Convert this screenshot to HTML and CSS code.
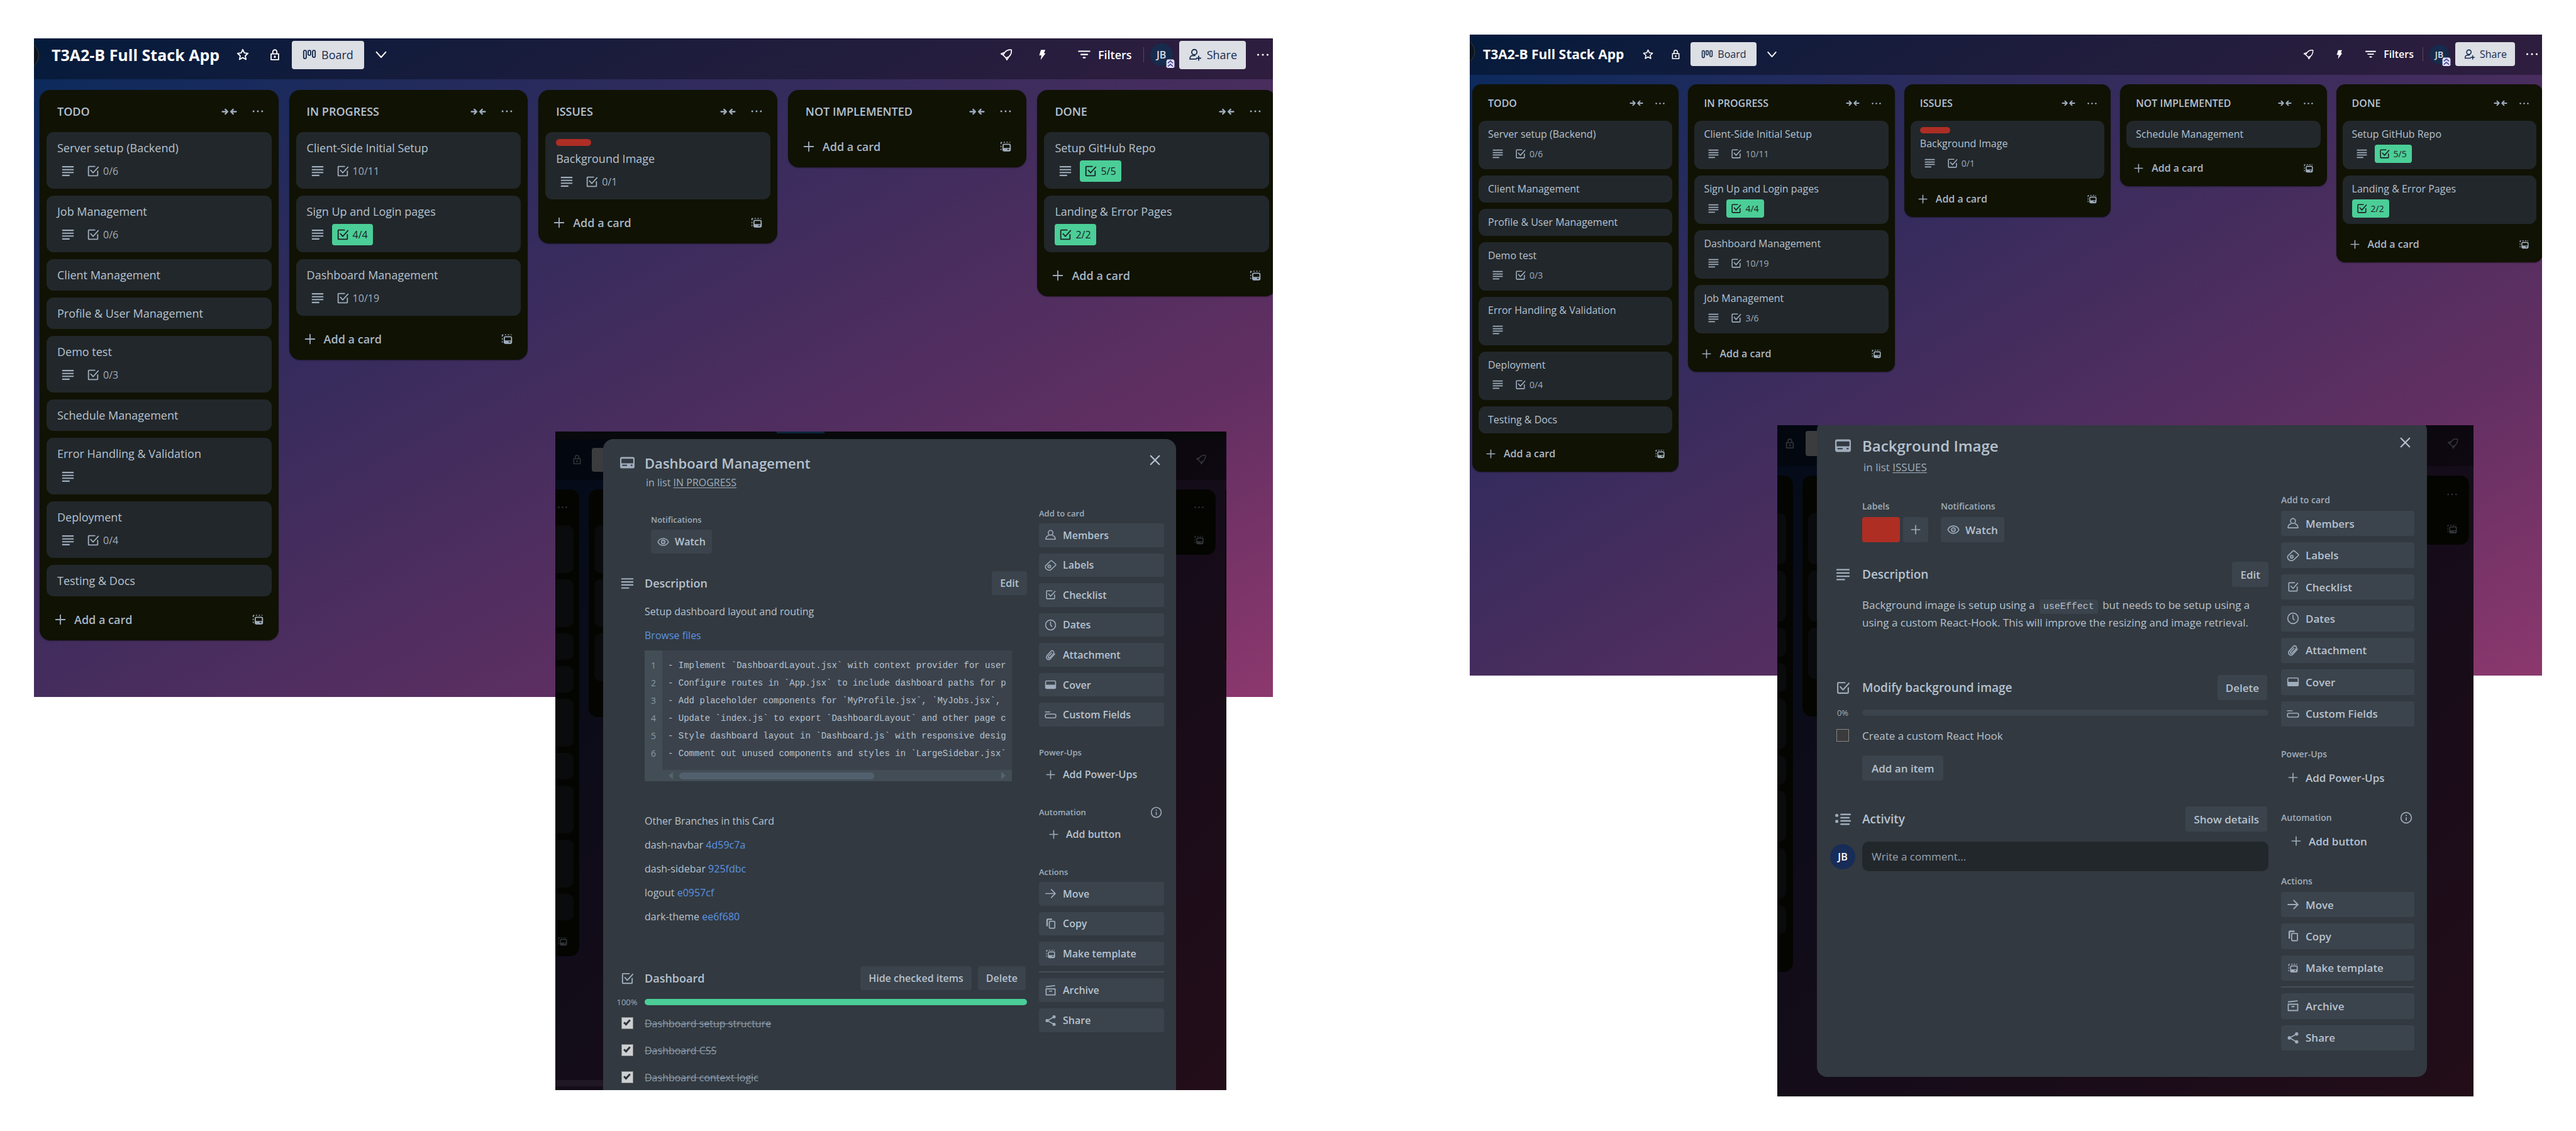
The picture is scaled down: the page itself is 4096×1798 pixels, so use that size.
FILE: index.html
```html
<!DOCTYPE html>
<html lang="en">
<head>
<meta charset="utf-8">
<title>T3A2-B Full Stack App</title>
<link rel="stylesheet" href="styles.css">
</head>
<body>
<svg class="sprite" aria-hidden="true">
  <symbol id="star" viewBox="0 0 24 24"><path d="M12 3l2.700 5.800 6.300.8-4.700 4.300 1.300 6.300L12 17l-5.600 3.200 1.300-6.300L3 9.600l6.300-.8z" fill="none" stroke="currentColor" stroke-width="2" stroke-linejoin="round"/></symbol>
  <symbol id="lock" viewBox="0 0 24 24"><path d="M5.500 10.500h13v10h-13zM8.500 10V7a3.500 3.500 0 0 1 7 0v3" fill="none" stroke="currentColor" stroke-width="2" stroke-linejoin="round"/><rect x="10.500" y="13.500" width="3" height="4" rx="1" fill="currentColor"/></symbol>
  <symbol id="boards" viewBox="0 0 24 24"><g fill="none" stroke="currentColor" stroke-width="2"><rect x="2" y="4.500" width="4.500" height="14" rx="2"/><rect x="9.750" y="4.500" width="4.500" height="8.500" rx="2"/><rect x="17.500" y="4.500" width="4.500" height="12" rx="2"/></g></symbol>
  <symbol id="chevron" viewBox="0 0 24 24"><path d="M4 7.500l8 9 8-9" fill="none" stroke="currentColor" stroke-width="2.400" stroke-linecap="round" stroke-linejoin="round"/></symbol>
  <symbol id="rocket" viewBox="0 0 24 24"><path d="M21 3.500c-5-.5-9 1-11.500 4.500L3 10.500l3.500 2 5 5L13 21l3.500-5.500C20 12.500 21.500 8.500 21 3.500zM6.500 12.500l3-4.500M11.500 17.500l5-2" fill="none" stroke="currentColor" stroke-width="1.800" stroke-linejoin="round"/></symbol>
  <symbol id="bolt" viewBox="0 0 24 24"><path d="M10 3.500h7.500l-2.300 6h2.800L9.500 21l1.300-8H7z" fill="currentColor"/></symbol>
  <symbol id="filter" viewBox="0 0 24 24"><path d="M2.500 6h19M6.500 11.500h11M10.500 17h3" fill="none" stroke="currentColor" stroke-width="2.400" stroke-linecap="round"/></symbol>
  <symbol id="invite" viewBox="0 0 24 24"><path d="M14 19.500H3.500v-1.500c0-2.500 2-4.500 4.500-4.500h4M18.500 14.500v7M15 18h7" fill="none" stroke="currentColor" stroke-width="2" stroke-linecap="round"/><circle cx="11" cy="7.500" r="4.500" fill="none" stroke="currentColor" stroke-width="2"/></symbol>
  <symbol id="dots" viewBox="0 0 24 24"><g fill="currentColor"><circle cx="4.500" cy="12" r="1.600"/><circle cx="12" cy="12" r="1.600"/><circle cx="19.500" cy="12" r="1.600"/></g></symbol>
  <symbol id="collapse" viewBox="0 0 24 24"><path d="M1.500 12H9M6 8.500L9.500 12 6 15.500M22.500 12H15M18 8.500L14.500 12l3.500 3.500" fill="none" stroke="currentColor" stroke-width="2.200" stroke-linecap="round" stroke-linejoin="round"/></symbol>
  <symbol id="desc" viewBox="0 0 24 24"><path d="M2 4.500h20M2 9.500h20M2 14.500h20M2 19.500h13" fill="none" stroke="currentColor" stroke-width="2.200"/></symbol>
  <symbol id="check" viewBox="0 0 24 24"><path d="M15 4H5a1 1 0 0 0-1 1v14a1 1 0 0 0 1 1h14a1 1 0 0 0 1-1v-7M8 10.500l4 4.500 9-10" fill="none" stroke="currentColor" stroke-width="2" stroke-linecap="round" stroke-linejoin="round"/></symbol>
  <symbol id="plus" viewBox="0 0 24 24"><path d="M12 4v16M4 12h16" fill="none" stroke="currentColor" stroke-width="2" stroke-linecap="round"/></symbol>
  <symbol id="template" viewBox="0 0 24 24"><path d="M4 18v-2.500M4 13v-2.500M4 8V5h2M8.500 4.500H11M13.500 4.500H16M18.500 4.500H20" fill="none" stroke="currentColor" stroke-width="1.600"/><rect x="7.500" y="8" width="12.500" height="11.500" rx="2" fill="none" stroke="currentColor" stroke-width="2"/><path fill-rule="evenodd" d="M7.500 14.500H20v4a1.500 1.500 0 0 1-1.500 1.500H9a1.500 1.500 0 0 1-1.500-1.500zM15 16v1.800h3V16z" fill="currentColor"/></symbol>
  <symbol id="card" viewBox="0 0 24 24"><path fill-rule="evenodd" fill="currentColor" d="M3 2.500h18a3 3 0 0 1 3 3v13a3 3 0 0 1-3 3H3a3 3 0 0 1-3-3v-13a3 3 0 0 1 3-3zM3 5.500a.8.8 0 0 0-.8.8v6.700h19.600V6.300a.8.8 0 0 0-.8-.8zM3.500 15.500v2h8v-2zM17.500 15.500v2h3v-2z"/></symbol>
  <symbol id="close" viewBox="0 0 24 24"><path d="M3.500 3.500l17 17M20.500 3.500l-17 17" fill="none" stroke="currentColor" stroke-width="2.800" stroke-linecap="round"/></symbol>
  <symbol id="eye" viewBox="0 0 24 24"><path d="M1.500 12C3.500 7.500 7.500 5 12 5s8.500 2.500 10.500 7c-2 4.500-6 7-10.500 7S3.500 16.500 1.500 12z" fill="none" stroke="currentColor" stroke-width="2"/><circle cx="12" cy="12" r="3.600" fill="none" stroke="currentColor" stroke-width="2"/><circle cx="12" cy="12" r="1" fill="currentColor"/></symbol>
  <symbol id="person" viewBox="0 0 24 24"><circle cx="12" cy="7.500" r="4.700" fill="none" stroke="currentColor" stroke-width="2"/><path d="M8.800 12.500C5 13.500 2.500 16 2.500 20.500h19c0-4.500-2.500-7-6.300-8" fill="none" stroke="currentColor" stroke-width="2" stroke-linejoin="round"/></symbol>
  <symbol id="label" viewBox="0 0 24 24"><path d="M2.500 12.500L12 3.500c.8-.8 2-.8 2.800 0l7 6c1 .8 1 2 .2 2.800l-8.500 8c-3 2.700-7.500 2.200-10-.6-2-2.300-2.500-4.700-1-7.200z" fill="none" stroke="currentColor" stroke-width="2" stroke-linejoin="round"/><circle cx="9.500" cy="14.500" r="2.800" fill="none" stroke="currentColor" stroke-width="1.800"/><circle cx="9.500" cy="14.500" r="1" fill="currentColor"/></symbol>
  <symbol id="clock" viewBox="0 0 24 24"><circle cx="12" cy="12" r="10" fill="none" stroke="currentColor" stroke-width="2"/><path d="M12 6v6l2.500 3" fill="none" stroke="currentColor" stroke-width="2" stroke-linecap="round"/></symbol>
  <symbol id="clip" viewBox="0 0 24 24"><path d="M20.500 9.500l-8.500 9.500c-2 2.200-5 2.500-7 .8s-2-4.800 0-7l7.500-8.300c1.400-1.500 3.500-1.700 5-.4s1.500 3.500.1 5L10.500 17c-.8.900-2 1-2.800.3s-.8-1.900 0-2.800l6-6.700" fill="none" stroke="currentColor" stroke-width="2" stroke-linecap="round"/></symbol>
  <symbol id="cover" viewBox="0 0 24 24"><rect x="2" y="4.500" width="20" height="15" rx="2" fill="none" stroke="currentColor" stroke-width="2"/><path d="M2 12h20v6.500a1.500 1.500 0 0 1-1.500 1.500h-17A1.500 1.500 0 0 1 2 18.500z" fill="currentColor"/></symbol>
  <symbol id="fields" viewBox="0 0 24 24"><path d="M1.500 6h9" fill="none" stroke="currentColor" stroke-width="2" stroke-linecap="round"/><rect x="1.500" y="10.500" width="21" height="7.500" rx="2.500" fill="none" stroke="currentColor" stroke-width="2"/></symbol>
  <symbol id="info" viewBox="0 0 24 24"><circle cx="12" cy="12" r="10" fill="none" stroke="currentColor" stroke-width="2"/><circle cx="12" cy="7.600" r="1.300" fill="currentColor"/><path d="M12 11v6.500" stroke="currentColor" stroke-width="2"/></symbol>
  <symbol id="arrow" viewBox="0 0 24 24"><path d="M2.500 12h18.500M13.500 4l8 8-8 8" fill="none" stroke="currentColor" stroke-width="2.200" stroke-linecap="round" stroke-linejoin="round"/></symbol>
  <symbol id="copy" viewBox="0 0 24 24"><path d="M5 17V4.500A1.500 1.500 0 0 1 6.500 3H15" fill="none" stroke="currentColor" stroke-width="3"/><rect x="9.500" y="7" width="11" height="14" rx="1.500" fill="none" stroke="currentColor" stroke-width="2.200"/></symbol>
  <symbol id="archive" viewBox="0 0 24 24"><path d="M3 9h18v12H3zM2.500 4.500L21 2.500M9 13.500h6" fill="none" stroke="currentColor" stroke-width="2.200"/></symbol>
  <symbol id="share" viewBox="0 0 24 24"><path d="M19 4.500L5.500 12 19 19.500" fill="none" stroke="currentColor" stroke-width="2"/><g fill="currentColor"><circle cx="19" cy="4.500" r="3.200"/><circle cx="5" cy="12" r="3.200"/><circle cx="19" cy="19.500" r="3.200"/></g></symbol>
  <symbol id="activity" viewBox="0 0 24 24"><g fill="currentColor"><circle cx="2.500" cy="6" r="2.400"/><circle cx="2.500" cy="15" r="2.400"/></g><path d="M9 4.500h14M9 9.500h12M9 14.500h14M9 19.500h12" fill="none" stroke="currentColor" stroke-width="2.400" stroke-linecap="round"/></symbol>
  <symbol id="premium" viewBox="0 0 24 24"><path d="M4 1h16l3 4v16l-3 3H4l-3-3V5z" fill="#dfe1fb"/><path d="M5 11l7-6 7 6M5 20l7-6 7 6" fill="none" stroke="#4a3f96" stroke-width="3"/></symbol>
</svg>

<main class="page">
  <section class="shot shot-first">
    <div class="board board-lg">
      <header class="bar">
        <h1>T3A2-B Full Stack App</h1>
        <button class="tool" aria-label="Star board"><svg><use href="#star"/></svg></button>
        <button class="tool" aria-label="Visibility"><svg><use href="#lock"/></svg></button>
        <button class="light view"><svg><use href="#boards"/></svg>Board</button>
        <button class="tool" aria-label="More views"><svg><use href="#chevron"/></svg></button>
        <div class="bar-end">
          <button class="tool" aria-label="Power-Ups"><svg><use href="#rocket"/></svg></button>
          <button class="tool" aria-label="Automation"><svg><use href="#bolt"/></svg></button>
          <button class="filters"><svg><use href="#filter"/></svg>Filters</button>
          <span class="avatar">JB<svg class="premium"><use href="#premium"/></svg></span>
          <button class="light"><svg><use href="#invite"/></svg>Share</button>
          <button class="more" aria-label="Menu"><svg><use href="#dots"/></svg></button>
        </div>
      </header>
      <div class="lists">
        <section class="list">
          <header><h2>TODO</h2><svg class="fold"><use href="#collapse"/></svg><svg><use href="#dots"/></svg></header>
          <ul>
            <li>Server setup (Backend)<div class="badges"><span><svg><use href="#desc"/></svg></span><span><svg><use href="#check"/></svg>0/6</span></div></li>
            <li>Job Management<div class="badges"><span><svg><use href="#desc"/></svg></span><span><svg><use href="#check"/></svg>0/6</span></div></li>
            <li>Client Management</li>
            <li>Profile &amp; User Management</li>
            <li>Demo test<div class="badges"><span><svg><use href="#desc"/></svg></span><span><svg><use href="#check"/></svg>0/3</span></div></li>
            <li>Schedule Management</li>
            <li>Error Handling &amp; Validation<div class="badges"><span><svg><use href="#desc"/></svg></span></div></li>
            <li>Deployment<div class="badges"><span><svg><use href="#desc"/></svg></span><span><svg><use href="#check"/></svg>0/4</span></div></li>
            <li>Testing &amp; Docs</li>
          </ul>
          <footer><button><svg><use href="#plus"/></svg>Add a card</button><svg><use href="#template"/></svg></footer>
        </section>
        <section class="list">
          <header><h2>IN PROGRESS</h2><svg class="fold"><use href="#collapse"/></svg><svg><use href="#dots"/></svg></header>
          <ul>
            <li>Client-Side Initial Setup<div class="badges"><span><svg><use href="#desc"/></svg></span><span><svg><use href="#check"/></svg>10/11</span></div></li>
            <li>Sign Up and Login pages<div class="badges"><span><svg><use href="#desc"/></svg></span><span class="done"><svg><use href="#check"/></svg>4/4</span></div></li>
            <li>Dashboard Management<div class="badges"><span><svg><use href="#desc"/></svg></span><span><svg><use href="#check"/></svg>10/19</span></div></li>
          </ul>
          <footer><button><svg><use href="#plus"/></svg>Add a card</button><svg><use href="#template"/></svg></footer>
        </section>
        <section class="list">
          <header><h2>ISSUES</h2><svg class="fold"><use href="#collapse"/></svg><svg><use href="#dots"/></svg></header>
          <ul>
            <li><i class="pill"></i>Background Image<div class="badges"><span><svg><use href="#desc"/></svg></span><span><svg><use href="#check"/></svg>0/1</span></div></li>
          </ul>
          <footer><button><svg><use href="#plus"/></svg>Add a card</button><svg><use href="#template"/></svg></footer>
        </section>
        <section class="list">
          <header><h2>NOT IMPLEMENTED</h2><svg class="fold"><use href="#collapse"/></svg><svg><use href="#dots"/></svg></header>
          <footer><button><svg><use href="#plus"/></svg>Add a card</button><svg><use href="#template"/></svg></footer>
        </section>
        <section class="list">
          <header><h2>DONE</h2><svg class="fold"><use href="#collapse"/></svg><svg><use href="#dots"/></svg></header>
          <ul>
            <li>Setup GitHub Repo<div class="badges"><span><svg><use href="#desc"/></svg></span><span class="done"><svg><use href="#check"/></svg>5/5</span></div></li>
            <li>Landing &amp; Error Pages<div class="badges"><span class="done"><svg><use href="#check"/></svg>2/2</span></div></li>
          </ul>
          <footer><button><svg><use href="#plus"/></svg>Add a card</button><svg><use href="#template"/></svg></footer>
        </section>
      </div>
    </div>

    <div class="detail detail-md">
      <div class="window">
        <div class="backdrop" aria-hidden="true">
          <div class="strip"><i></i></div>
          <div class="dim-bar"><svg><use href="#lock"/></svg><b></b><svg class="far"><use href="#rocket"/></svg></div>
          <div class="dim-lists">
            <div class="dim-list cut-left"><svg><use href="#dots"/></svg><i class="tall"></i><i class="tall"></i><i></i><i></i><i class="tall"></i><i></i><i class="tall"></i><i class="tall"></i><i></i><svg class="low"><use href="#template"/></svg></div>
            <div class="dim-list second"><svg></svg><i class="tall"></i><i class="tall"></i><i class="tall"></i><svg class="low"></svg></div>
            <div class="dim-list fourth"><svg><use href="#dots"/></svg><svg class="low"><use href="#template"/></svg></div>
            <div class="dim-list fifth"></div>
          </div>
          <div class="scroll"></div>
        </div>
        <article class="modal">
          <header class="modal-head">
            <svg><use href="#card"/></svg>
            <div><h2>Dashboard Management</h2><p>in list <a href="#">IN PROGRESS</a></p></div>
            <button class="close" aria-label="Close"><svg><use href="#close"/></svg></button>
          </header>
          <div class="modal-main">
            <div class="meta">
              <div><h3>Notifications</h3><button class="btn"><svg><use href="#eye"/></svg>Watch</button></div>
            </div>
            <div class="row after-meta"><svg><use href="#desc"/></svg><h3>Description</h3><button class="btn">Edit</button></div>
            <div class="text">
              <p>Setup dashboard layout and routing</p>
              <p><a href="#">Browse files</a></p>
              <div class="code">
                <pre class="nums">1
2
3
4
5
6</pre>
                <pre class="lines">- Implement `DashboardLayout.jsx` with context provider for user
- Configure routes in `App.jsx` to include dashboard paths for p
- Add placeholder components for `MyProfile.jsx`, `MyJobs.jsx`,
- Update `index.js` to export `DashboardLayout` and other page c
- Style dashboard layout in `Dashboard.js` with responsive desig
- Comment out unused components and styles in `LargeSidebar.jsx`</pre>
                <div class="track"><i></i></div>
              </div>
              <p>Other Branches in this Card</p>
              <p>dash-navbar <a href="#">4d59c7a</a></p>
              <p>dash-sidebar <a href="#">925fdbc</a></p>
              <p>logout <a href="#">e0957cf</a></p>
              <p>dark-theme <a href="#">ee6f680</a></p>
            </div>
            <div class="row after-text"><svg><use href="#check"/></svg><h3>Dashboard</h3><button class="btn">Hide checked items</button><button class="btn">Delete</button></div>
            <div class="progress"><span>100%</span><div><i style="width:100%"></i></div></div>
            <label class="item"><input type="checkbox" checked><span>Dashboard setup structure</span></label>
            <label class="item"><input type="checkbox" checked><span>Dashboard CSS</span></label>
            <label class="item"><input type="checkbox" checked><span>Dashboard context logic</span></label>
          </div>
          <aside class="modal-side">
            <h3>Add to card</h3>
            <div class="stack seven">
              <button class="btn"><svg><use href="#person"/></svg>Members</button>
              <button class="btn"><svg><use href="#label"/></svg>Labels</button>
              <button class="btn"><svg><use href="#check"/></svg>Checklist</button>
              <button class="btn"><svg><use href="#clock"/></svg>Dates</button>
              <button class="btn"><svg><use href="#clip"/></svg>Attachment</button>
              <button class="btn"><svg><use href="#cover"/></svg>Cover</button>
              <button class="btn"><svg><use href="#fields"/></svg>Custom Fields</button>
            </div>
            <h3>Power-Ups</h3>
            <button class="btn bare"><svg><use href="#plus"/></svg>Add Power-Ups</button>
            <h3>Automation<svg><use href="#info"/></svg></h3>
            <button class="btn bare inset"><svg><use href="#plus"/></svg>Add button</button>
            <h3>Actions</h3>
            <div class="stack three">
              <button class="btn"><svg><use href="#arrow"/></svg>Move</button>
              <button class="btn"><svg><use href="#copy"/></svg>Copy</button>
              <button class="btn"><svg><use href="#template"/></svg>Make template</button>
            </div>
            <hr>
            <div class="stack two">
              <button class="btn"><svg><use href="#archive"/></svg>Archive</button>
              <button class="btn"><svg><use href="#share"/></svg>Share</button>
            </div>
          </aside>
        </article>
      </div>
    </div>
  </section>

  <section class="shot shot-second">
    <div class="board board-sm">
      <header class="bar">
        <h1>T3A2-B Full Stack App</h1>
        <button class="tool" aria-label="Star board"><svg><use href="#star"/></svg></button>
        <button class="tool" aria-label="Visibility"><svg><use href="#lock"/></svg></button>
        <button class="light view"><svg><use href="#boards"/></svg>Board</button>
        <button class="tool" aria-label="More views"><svg><use href="#chevron"/></svg></button>
        <div class="bar-end">
          <button class="tool" aria-label="Power-Ups"><svg><use href="#rocket"/></svg></button>
          <button class="tool" aria-label="Automation"><svg><use href="#bolt"/></svg></button>
          <button class="filters"><svg><use href="#filter"/></svg>Filters</button>
          <span class="avatar">JB<svg class="premium"><use href="#premium"/></svg></span>
          <button class="light"><svg><use href="#invite"/></svg>Share</button>
          <button class="more" aria-label="Menu"><svg><use href="#dots"/></svg></button>
        </div>
      </header>
      <div class="lists">
        <section class="list">
          <header><h2>TODO</h2><svg class="fold"><use href="#collapse"/></svg><svg><use href="#dots"/></svg></header>
          <ul>
            <li>Server setup (Backend)<div class="badges"><span><svg><use href="#desc"/></svg></span><span><svg><use href="#check"/></svg>0/6</span></div></li>
            <li>Client Management</li>
            <li>Profile &amp; User Management</li>
            <li>Demo test<div class="badges"><span><svg><use href="#desc"/></svg></span><span><svg><use href="#check"/></svg>0/3</span></div></li>
            <li>Error Handling &amp; Validation<div class="badges"><span><svg><use href="#desc"/></svg></span></div></li>
            <li>Deployment<div class="badges"><span><svg><use href="#desc"/></svg></span><span><svg><use href="#check"/></svg>0/4</span></div></li>
            <li>Testing &amp; Docs</li>
          </ul>
          <footer><button><svg><use href="#plus"/></svg>Add a card</button><svg><use href="#template"/></svg></footer>
        </section>
        <section class="list">
          <header><h2>IN PROGRESS</h2><svg class="fold"><use href="#collapse"/></svg><svg><use href="#dots"/></svg></header>
          <ul>
            <li>Client-Side Initial Setup<div class="badges"><span><svg><use href="#desc"/></svg></span><span><svg><use href="#check"/></svg>10/11</span></div></li>
            <li>Sign Up and Login pages<div class="badges"><span><svg><use href="#desc"/></svg></span><span class="done"><svg><use href="#check"/></svg>4/4</span></div></li>
            <li>Dashboard Management<div class="badges"><span><svg><use href="#desc"/></svg></span><span><svg><use href="#check"/></svg>10/19</span></div></li>
            <li>Job Management<div class="badges"><span><svg><use href="#desc"/></svg></span><span><svg><use href="#check"/></svg>3/6</span></div></li>
          </ul>
          <footer><button><svg><use href="#plus"/></svg>Add a card</button><svg><use href="#template"/></svg></footer>
        </section>
        <section class="list">
          <header><h2>ISSUES</h2><svg class="fold"><use href="#collapse"/></svg><svg><use href="#dots"/></svg></header>
          <ul>
            <li><i class="pill"></i>Background Image<div class="badges"><span><svg><use href="#desc"/></svg></span><span><svg><use href="#check"/></svg>0/1</span></div></li>
          </ul>
          <footer><button><svg><use href="#plus"/></svg>Add a card</button><svg><use href="#template"/></svg></footer>
        </section>
        <section class="list">
          <header><h2>NOT IMPLEMENTED</h2><svg class="fold"><use href="#collapse"/></svg><svg><use href="#dots"/></svg></header>
          <ul>
            <li>Schedule Management</li>
          </ul>
          <footer><button><svg><use href="#plus"/></svg>Add a card</button><svg><use href="#template"/></svg></footer>
        </section>
        <section class="list">
          <header><h2>DONE</h2><svg class="fold"><use href="#collapse"/></svg><svg><use href="#dots"/></svg></header>
          <ul>
            <li>Setup GitHub Repo<div class="badges"><span><svg><use href="#desc"/></svg></span><span class="done"><svg><use href="#check"/></svg>5/5</span></div></li>
            <li>Landing &amp; Error Pages<div class="badges"><span class="done"><svg><use href="#check"/></svg>2/2</span></div></li>
          </ul>
          <footer><button><svg><use href="#plus"/></svg>Add a card</button><svg><use href="#template"/></svg></footer>
        </section>
      </div>
    </div>

    <div class="detail detail-xl">
      <div class="window">
        <div class="backdrop" aria-hidden="true">
          <div class="dim-bar"><svg><use href="#lock"/></svg><b></b><svg class="far"><use href="#rocket"/></svg></div>
          <div class="dim-lists">
            <div class="dim-list cut-left"><svg></svg><i class="tall"></i><i class="tall"></i><i></i><i></i><i class="tall"></i><i></i><i class="tall"></i><i class="tall"></i><i></i><svg class="low"></svg></div>
            <div class="dim-list second"><svg></svg><i class="tall"></i><i class="tall"></i><i class="tall"></i><svg class="low"></svg></div>
            <div class="dim-list fourth"><svg><use href="#dots"/></svg><svg class="low"><use href="#template"/></svg></div>
          </div>
        </div>
        <article class="modal">
          <header class="modal-head">
            <svg><use href="#card"/></svg>
            <div><h2>Background Image</h2><p>in list <a href="#">ISSUES</a></p></div>
            <button class="close" aria-label="Close"><svg><use href="#close"/></svg></button>
          </header>
          <div class="modal-main">
            <div class="meta">
              <div><h3>Labels</h3><div class="labels"><i></i><button class="btn" aria-label="Add label"><svg><use href="#plus"/></svg></button></div></div>
              <div><h3>Notifications</h3><button class="btn"><svg><use href="#eye"/></svg>Watch</button></div>
            </div>
            <div class="row after-meta"><svg><use href="#desc"/></svg><h3>Description</h3><button class="btn">Edit</button></div>
            <div class="text">
              <p>Background image is setup using a <code>useEffect</code> but needs to be setup using a using a custom React-Hook. This will improve the resizing and image retrieval.</p>
            </div>
            <div class="row after-text"><svg><use href="#check"/></svg><h3>Modify background image</h3><button class="btn">Delete</button></div>
            <div class="progress"><span>0%</span><div><i style="width:0%"></i></div></div>
            <label class="item"><input type="checkbox"><span>Create a custom React Hook</span></label>
            <div class="add-item"><button class="btn">Add an item</button></div>
            <div class="row activity"><svg><use href="#activity"/></svg><h3>Activity</h3><button class="btn">Show details</button></div>
            <div class="comment"><span class="avatar">JB</span><input type="text" placeholder="Write a comment..." aria-label="Comment"></div>
          </div>
          <aside class="modal-side">
            <h3>Add to card</h3>
            <div class="stack seven">
              <button class="btn"><svg><use href="#person"/></svg>Members</button>
              <button class="btn"><svg><use href="#label"/></svg>Labels</button>
              <button class="btn"><svg><use href="#check"/></svg>Checklist</button>
              <button class="btn"><svg><use href="#clock"/></svg>Dates</button>
              <button class="btn"><svg><use href="#clip"/></svg>Attachment</button>
              <button class="btn"><svg><use href="#cover"/></svg>Cover</button>
              <button class="btn"><svg><use href="#fields"/></svg>Custom Fields</button>
            </div>
            <h3>Power-Ups</h3>
            <button class="btn bare"><svg><use href="#plus"/></svg>Add Power-Ups</button>
            <h3>Automation<svg><use href="#info"/></svg></h3>
            <button class="btn bare inset"><svg><use href="#plus"/></svg>Add button</button>
            <h3>Actions</h3>
            <div class="stack three">
              <button class="btn"><svg><use href="#arrow"/></svg>Move</button>
              <button class="btn"><svg><use href="#copy"/></svg>Copy</button>
              <button class="btn"><svg><use href="#template"/></svg>Make template</button>
            </div>
            <hr>
            <div class="stack two">
              <button class="btn"><svg><use href="#archive"/></svg>Archive</button>
              <button class="btn"><svg><use href="#share"/></svg>Share</button>
            </div>
          </aside>
        </article>
      </div>
    </div>
  </section>
</main>
</body>
</html>
```
FILE: styles.css
```css
*, *::before, *::after { box-sizing: border-box; }
body {
  margin: 0;
  background: #fff;
  color: #b6c2cf;
  font-family: "Open Sans", "Noto Sans", sans-serif;
}
h1, h2, h3, p, ul, pre { margin: 0; padding: 0; }
ul { list-style: none; }
button {
  display: flex;
  align-items: center;
  margin: 0;
  padding: 0;
  border: 0;
  background: none;
  color: inherit;
  font: inherit;
}
svg { display: block; flex: none; }
.sprite { position: absolute; width: 0; height: 0; }

.page {
  display: grid;
  grid-template-columns: 1970fr 1705fr;
  column-gap: 313px;
  padding: 0 54px;
  overflow: hidden;
}
.shot { min-width: 0; padding-bottom: 55px; }
.shot-first { padding-top: 61px; }
.shot-second { padding-top: 55px; }

/* Board sizes */
.board-lg {
  --text: 18px; --small: 16px; --title: 25px; --icon: 22px;
  --bar: 65px; --bar-pad: 13px; --bar-left: 28px; --title-gap: 11px; --tool: 51px; --tool-end: 57px;
  --light-h: 45px; --light-pad: 14px; --light-gap: 8px; --avatar: 36px; --filter-l: 27px; --filter-r: 18px;
  --list-gap: 17px; --list-top: 17px; --list-left: 9px; --list-over: -5px;
  --head: 56px; --foot: 67px; --edge: 22px; --fold: 22px; --fold-w: 25px; --radius: 17px;
  --card-x: 11px; --card-pad: 17px; --gap: 11px; --card-y: 11px; --line: 28px;
  --badge-h: 34px; --badge-gap: 6px; --pill-w: 56px; --pill-h: 11px;
  min-height: 1047px;
}
.board-sm {
  --text: 16px; --small: 14px; --title: 21px; --icon: 19px;
  --bar: 64px; --bar-pad: 2px; --bar-left: 21px; --title-gap: 16px; --tool: 44px; --tool-end: 49px;
  --light-h: 38px; --light-pad: 13px; --light-gap: 7px; --avatar: 31px; --filter-l: 16px; --filter-r: 14px;
  --list-gap: 15px; --list-top: 15px; --list-left: 4px; --list-over: -1px;
  --head: 48px; --foot: 58px; --edge: 20px; --fold: 17px; --fold-w: 22px; --radius: 14px;
  --card-x: 10px; --card-pad: 15px; --gap: 10px; --card-y: 10px; --line: 23px;
  --badge-h: 29px; --badge-gap: 5px; --pill-w: 48px; --pill-h: 10px;
  min-height: 1019px;
}
.board {
  overflow: hidden;
  background: linear-gradient(to bottom right, #082a5c 0%, #2a2b5c 25%, #452d5e 50%, #622f62 75%, #8c386d 100%);
  font-size: var(--text);
}
.bar {
  position: relative;
  display: flex;
  align-items: center;
  height: var(--bar);
  padding: 0 0 var(--bar-pad) var(--bar-left);
  background: rgba(0, 0, 0, .34);
  color: #fff;
}
.bar::before {
  content: "";
  position: absolute;
  left: -34px;
  top: 6px;
  width: 42px;
  height: 42px;
  border: 1px solid #3a3d2c;
  border-radius: 50%;
  background: #0b1420;
}
.bar svg { width: var(--icon); height: var(--icon); }
.bar h1 {
  margin-right: var(--title-gap);
  font-size: var(--title);
  line-height: 1;
  font-weight: 700;
  white-space: nowrap;
}
.tool { justify-content: center; width: var(--tool); height: var(--light-h); }
.light {
  gap: var(--light-gap);
  height: var(--light-h);
  padding: 0 var(--light-pad);
  border-radius: 4px;
  background: #dcdfe4;
  color: #172b4d;
}
.view { margin: 0 2px; padding: 0 17px; }
.bar-end { display: flex; align-items: center; margin-left: auto; }
.bar-end .tool { width: var(--tool-end); }
.filters {
  gap: 11px;
  padding: 0 var(--filter-r) 0 var(--filter-l);
  border-right: 1px solid #58475f;
  font-weight: 600;
}
.avatar {
  display: grid;
  place-items: center;
  width: var(--avatar);
  height: var(--avatar);
  border-radius: 50%;
  background: #172b4d;
  color: #dcdfe4;
  font-weight: 600;
}
.bar .avatar { position: relative; margin: 0 10px; font-size: var(--small); }
.bar .premium { position: absolute; right: -3px; bottom: -3px; width: 14px; height: 14px; }
.more { margin: 0 4px 0 15px; }
.more svg { width: 24px; height: 24px; }

.lists {
  display: grid;
  grid-template-columns: repeat(5, minmax(0, 1fr));
  align-items: start;
  gap: var(--list-gap);
  margin-right: var(--list-over);
  padding: var(--list-top) 0 0 var(--list-left);
}
.list {
  border-radius: var(--radius);
  background: #101204;
  box-shadow: 0 1px 2px rgba(0, 0, 0, .4);
  white-space: nowrap;
}
.list svg { width: var(--icon); height: var(--icon); color: #9fadbc; }
.list header, .list footer { display: flex; align-items: center; padding-right: var(--edge); }
.list header { height: var(--head); padding-top: 12px; padding-left: calc(var(--card-x) + var(--card-pad)); }
.list h2 { flex: 1; font-size: var(--text); font-weight: 600; }
.list .fold { width: var(--fold-w); height: var(--fold-w); margin-right: var(--fold); }
.list footer { justify-content: space-between; height: var(--foot); padding-left: var(--edge); }
.list footer button { gap: 11px; color: #a9b6c3; font-weight: 600; }
.list ul { display: grid; gap: var(--gap); padding: var(--gap) var(--card-x) 3px; }
.list li {
  padding: var(--card-y) var(--card-pad);
  border-radius: 11px;
  background: #22272b;
  line-height: var(--line);
}
.pill {
  display: block;
  width: var(--pill-w);
  height: var(--pill-h);
  margin-bottom: var(--badge-gap);
  border-radius: 6px;
  background: #ae2e24;
}
.badges { display: flex; gap: var(--badge-gap); margin-top: var(--badge-gap); color: #9fadbc; font-size: var(--small); }
.badges span { display: flex; align-items: center; gap: 5px; height: var(--badge-h); padding: 0 6px; border-radius: 4px; }
.badges .done { padding-right: 8px; background: #4bce97; color: #1d2125; }
.badges .done svg { color: #1d2125; }

/* Card detail sizes */
.detail-md {
  --text: 16px; --small: 13px; --title: 22px; --heading: 18px; --icon: 19px; --big: 23px;
  --btn: 38px; --col: 56px; --side: 199px; --pad: 19px; --head-top: 20px; --title-line: 36px; --sub-line: 26px;
  --label: 20px; --meta-top: 36px; --section: 31px; --line: 38px;
  --after-meta: 28px; --text-top: 7px; --after-text: 60px; --item: 43px; --box: 19px;
  --tall: 76px; --short: 42px; --dim-head: 57px;
  grid-template-columns: 829fr 1067fr 74fr;
  margin-top: -422px;
}
.detail-xl {
  --text: 17px; --small: 14px; --title: 24px; --heading: 19px; --icon: 20px; --big: 25px;
  --btn: 40px; --col: 62px; --side: 212px; --pad: 20px; --head-top: 22px; --title-line: 38px; --sub-line: 30px;
  --label: 22px; --meta-top: 36px; --section: 33px; --line: 27px;
  --after-meta: 31px; --text-top: 15px; --after-text: 70px; --item: 46px; --box: 20px;
  --tall: 81px; --short: 46px; --dim-head: 60px;
  grid-template-columns: 489fr 1107fr 109fr;
  margin-top: -398px;
}
.detail { position: relative; display: grid; font-size: var(--text); }
.window { position: relative; display: grid; grid-column: 2; overflow: hidden; }
.detail-md .window { grid-template-columns: 76fr 911fr 80fr; height: 1047px; padding-top: 12px; }
.detail-xl .window { grid-template-columns: 63fr 970fr 74fr; min-height: 1067px; padding-bottom: 31px; }

.backdrop {
  position: absolute;
  inset: 0;
  display: flex;
  flex-direction: column;
  background: linear-gradient(to bottom right, #0b2a5c 0%, #3a2c5c 35%, #5a2d5e 65%, #80305a 100%);
  filter: brightness(.27);
}
.backdrop svg { width: var(--icon); height: var(--icon); color: #b6c2cf; }
.strip { flex: none; display: flex; justify-content: center; height: 12px; background: #1d2125; }
.strip i { width: 76px; height: 3px; margin-right: 288px; background: #2f8fe0; }
.dim-bar { flex: none; display: flex; align-items: center; height: 65px; background: rgba(0, 0, 0, .34); }
.dim-bar b { height: var(--btn); width: 60px; border-radius: 4px; background: #dcdfe4; }
.dim-bar .far { margin-left: auto; }
.detail-md .dim-bar { padding: 0 31px 0 25px; gap: 14px; }
.detail-xl .dim-bar { padding: 0 23px 8px 10px; gap: 15px; }
.dim-lists { display: flex; align-items: flex-start; gap: 15px; padding-top: 15px; }
.dim-list { display: flex; flex-direction: column; gap: 10px; border-radius: 14px; background: #101204; padding: 0 9px; }
.dim-list i { height: var(--short); border-radius: 10px; background: #22272b; }
.dim-list .tall { height: var(--tall); }
.dim-list svg { align-self: flex-end; height: calc(var(--dim-head) - 10px); margin-right: 8px; padding-top: 10px; }
.dim-list .low { height: calc(var(--dim-head) - 10px); padding: 0; }
.cut-left { border-radius: 0 14px 14px 0; padding-left: 0; width: 38px; overflow: hidden; }
.cut-left i { border-radius: 0 10px 10px 0; }
.detail-xl .cut-left { width: 25px; padding-right: 11px; }
.second { width: 60px; }
.fourth { width: 110px; margin-left: auto; }
.detail-xl .fourth { margin-right: 7px; }
.fifth { width: 2px; height: 272px; padding: 0; border-radius: 2px 0 0 2px; }
.scroll { height: 10px; margin-top: auto; margin-bottom: 6px; margin-right: 50%; background: #745a80; }

.modal {
  position: relative;
  grid-column: 2;
  display: grid;
  grid-template-columns: minmax(0, 1fr) var(--side);
  grid-template-rows: auto 1fr;
  column-gap: var(--pad);
  padding: 0 var(--pad) 0 10px;
  border-radius: 16px 16px 0 0;
  background: #323940;
}
.detail-xl .modal { margin-top: -8px; border-radius: 16px; padding-bottom: 41px; }
.modal-head {
  grid-column: 1 / -1;
  display: grid;
  grid-template-columns: var(--col) 1fr auto;
  padding-top: var(--head-top);
}
.modal-head > svg { width: var(--big); height: var(--big); margin: 6px auto 0; color: #9fadbc; }
.modal-head h2 { font-size: var(--title); line-height: var(--title-line); font-weight: 600; }
.modal-head p { padding-left: 2px; line-height: var(--sub-line); color: #9fadbc; }
.modal-head a { color: inherit; }
.close { align-self: start; padding: 4px 5px 0 0; }
.close svg { width: 19px; height: 19px; }

.modal h3 { font-size: var(--heading); font-weight: 600; }
.modal a { text-underline-offset: 2px; }
.btn {
  justify-content: center;
  gap: 9px;
  height: var(--btn);
  padding: 0 13px;
  border-radius: 4px;
  background: #3b434c;
  font-weight: 600;
  white-space: nowrap;
}
.btn svg { width: var(--icon); height: var(--icon); color: #9fadbc; }
.meta { display: flex; gap: 20px; padding: var(--meta-top) 0 0 var(--col); }
.meta .btn { padding: 0 10px; }
.detail-md .meta { padding-left: 66px; }
.meta h3, .modal-side h3 {
  display: flex;
  align-items: center;
  justify-content: space-between;
  margin-bottom: 6px;
  color: #9fadbc;
  font-size: var(--small);
  line-height: var(--label);
}
.labels { display: flex; gap: 5px; }
.labels i { width: 60px; border-radius: 4px; background: #ae2e24; }
.row { display: grid; grid-template-columns: var(--col) 1fr auto; grid-auto-flow: column; align-items: center; column-gap: 0; }
.row > svg { width: var(--big); height: var(--big); margin: 0 auto; color: #9fadbc; }
.row .btn + .btn { margin-left: 10px; }
.after-meta { margin-top: var(--after-meta); }
.after-text { margin-top: var(--after-text); padding-right: 2px; }
.text { padding-left: var(--col); padding-top: var(--text-top); line-height: var(--line); }
.text a { color: #5c93e0; text-decoration: none; }
.text code {
  display: inline-block;
  margin: 0 3px;
  padding: 0 6px;
  border-radius: 4px;
  background: #3b434c;
  font: 15px/23px "Liberation Mono", monospace;
}
.code {
  display: grid;
  grid-template: 1fr 18px / 28px 1fr;
  margin: 5px 24px 44px 0;
  background: #3b424c;
  font-size: 14px;
  line-height: 28px;
}
.nums { grid-row: 1 / 3; padding-top: 10px; background: #424d55; color: #8c9bab; font-family: inherit; text-align: center; }
.lines { padding: 10px 0 12px 9px; font-family: "Liberation Mono", monospace; overflow: hidden; }
.track { display: flex; align-items: center; justify-content: space-between; padding: 0 10px; background: #424d55; }
.track::before, .track::after { content: ""; border: solid transparent; border-width: 6px 0; }
.track::before { border-right: 7px solid #55636e; }
.track::after { border-left: 7px solid #55636e; }
.track i { width: 310px; height: 11px; margin-right: auto; margin-left: 10px; border-radius: 6px; background: #51606c; }

.progress { display: grid; grid-template-columns: var(--col) 1fr; align-items: center; margin-top: 9px; line-height: var(--label); }
.progress span { text-align: center; color: #9fadbc; font-size: 13px; }
.progress div { height: 10px; border-radius: 5px; background: #3b434c; overflow: hidden; }
.progress i { display: block; height: 100%; background: #4bce97; }
.item { display: grid; grid-template-columns: var(--col) 1fr; align-items: center; height: var(--item); }
.progress + .item { margin-top: 2px; }
.item input {
  appearance: none;
  display: grid;
  width: var(--box);
  height: var(--box);
  margin: 0 auto;
  border: 1px solid #858585;
  background: #3b3b3b;
}
.item input:checked { background: #cdd0d3; }
.item input:checked::after {
  content: "";
  width: 6px;
  height: 11px;
  margin: 1px auto 0;
  border: solid #30343a;
  border-width: 0 3px 3px 0;
  transform: rotate(42deg);
}
.item input:checked + span { color: #8c9bab; text-decoration: line-through; }
.add-item { padding: 9px 0 0 var(--col); }
.add-item .btn { padding: 0 15px; }
.activity { margin-top: 41px; padding-right: 2px; }
.comment { display: grid; grid-template-columns: var(--col) 1fr; align-items: center; margin-top: 16px; }
.comment .avatar { width: 40px; height: 40px; margin: 0 auto; background: #182c58; color: #fff; font-size: 16px; }
.comment input {
  height: 47px;
  padding: 0 15px;
  border: 0;
  border-radius: 10px;
  background: #22272b;
  color: #b6c2cf;
  font: inherit;
}
.comment input::placeholder { color: #96a4b2; opacity: 1; }

.modal-side { padding-top: 26px; }
.modal-side h3 svg { width: var(--icon); height: var(--icon); margin-right: 3px; }
.modal-side .btn { justify-content: flex-start; gap: 10px; padding: 0 9px; }
.stack { display: grid; grid-auto-rows: 1fr; gap: 10px; }
.stack .btn { height: auto; }
.modal-side h3 ~ h3 { margin-top: var(--section); }
.modal-side .bare { background: none; }
.modal-side .inset { padding-left: 14px; }
.modal-side hr { height: 2px; margin: 9px 0 9px; border: 0; background: #454f59; }
.detail-md .seven { min-height: 323px; }
.detail-md .three { min-height: 133px; }
.detail-md .two { min-height: 86px; }
.detail-xl .seven { min-height: 343px; }
.detail-xl .three { min-height: 141px; }
.detail-xl .two { min-height: 91px; }
```
